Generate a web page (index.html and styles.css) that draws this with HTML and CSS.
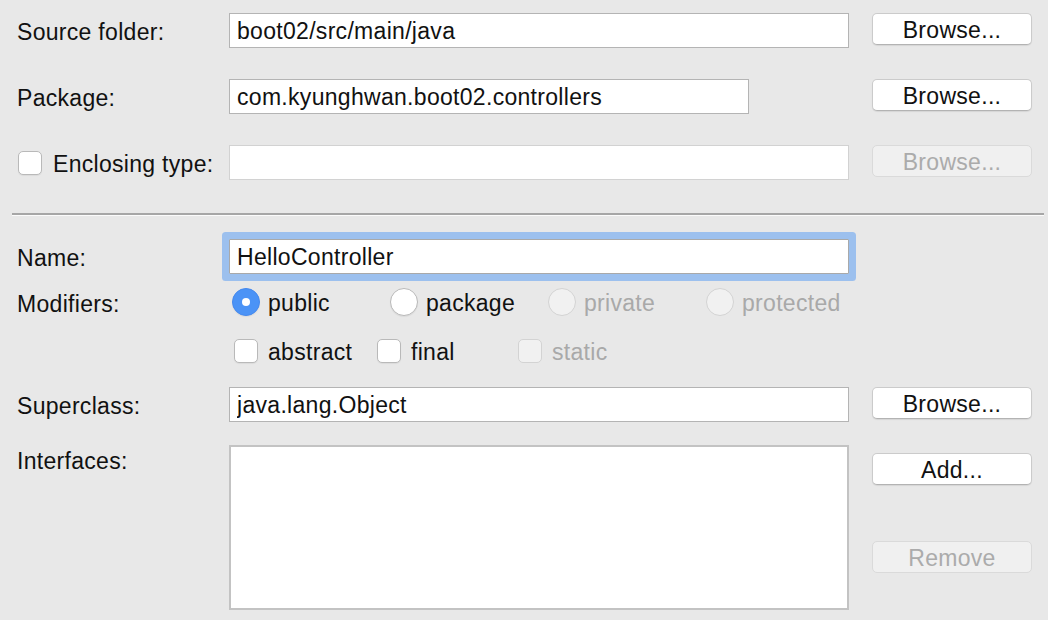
FILE: index.html
```html
<!DOCTYPE html>
<html>
<head>
<meta charset="utf-8">
<link rel="stylesheet" href="styles.css">
</head>
<body>
<div class="dialog">
  <div class="row r-first">
    <span class="lbl">Source folder:</span>
    <input class="field" type="text" value="boot02/src/main/java">
    <button class="btn">Browse...</button>
  </div>
  <div class="row r-gap31">
    <span class="lbl">Package:</span>
    <input class="field short" type="text" value="com.kyunghwan.boot02.controllers">
    <button class="btn">Browse...</button>
  </div>
  <div class="row r-gap31">
    <span class="lbl with-check"><span class="check"></span>Enclosing type:</span>
    <input class="field disabled" type="text" value="">
    <button class="btn disabled">Browse...</button>
  </div>

  <div class="separator"></div>

  <div class="row r-name">
    <span class="lbl">Name:</span>
    <input class="field focused" type="text" value="HelloController">
  </div>
  <div class="row r-mods">
    <span class="lbl">Modifiers:</span>
    <div class="options radios">
      <span class="opt"><span class="radio on"></span>public</span>
      <span class="opt"><span class="radio"></span>package</span>
      <span class="opt off"><span class="radio"></span>private</span>
      <span class="opt off"><span class="radio"></span>protected</span>
    </div>
  </div>
  <div class="row r-checks">
    <span class="lbl"></span>
    <div class="options checks">
      <span class="opt w-abstract"><span class="check"></span>abstract</span>
      <span class="opt w-final"><span class="check"></span>final</span>
      <span class="opt off"><span class="check"></span>static</span>
    </div>
  </div>
  <div class="row r-super">
    <span class="lbl">Superclass:</span>
    <input class="field" type="text" value="java.lang.Object">
    <button class="btn">Browse...</button>
  </div>
  <div class="row r-ifaces">
    <span class="lbl top">Interfaces:</span>
    <div class="list"></div>
    <div class="btn-col">
      <button class="btn">Add...</button>
      <button class="btn disabled">Remove</button>
    </div>
  </div>
</div>
</body>
</html>
```

FILE: styles.css
```css
html, body {
  margin: 0;
  padding: 0;
  background: #e8e8e8;
  height: 100%;
  overflow: hidden;
}
body {
  font-family: "Liberation Sans", Arial, sans-serif;
  font-size: 23px;
  line-height: 26px;
  letter-spacing: 0.3px;
  color: #111;
}
.dialog {
  padding: 13px 16px 0 17px;
  width: 1015px;
}
.row {
  display: grid;
  grid-template-columns: 189px 620px 160px;
  column-gap: 23px;
  align-items: center;
}
.r-gap31 { margin-top: 31px; }
.lbl {
  white-space: nowrap;
  display: flex;
  align-items: center;
  padding-top: 2px;
  height: 26px;
}
.lbl.top { align-self: start; padding-top: 3px; }
.with-check .check { margin-left: 1px; margin-right: 11px; position: relative; top: -1px; }

.field {
  box-sizing: border-box;
  height: 35px;
  width: 620px;
  margin: 0;
  padding: 2px 7px 0;
  border: 1px solid #b4b4b4;
  background: #fff;
  font-family: inherit;
  font-size: 23px;
  letter-spacing: 0.3px;
  color: #111;
  outline: none;
  border-radius: 0;
}
.field.short { width: 520px; }
.field.disabled { border-color: #d2d2d2; }
.field.focused {
  border-color: #a9a9a9;
  box-shadow: 0 0 0 7px #9cc0ee;
  border-radius: 1px;
}

.btn {
  box-sizing: border-box;
  align-self: start;
  width: 160px;
  height: 32px;
  margin: 0;
  padding: 2px 0 0;
  background: #fff;
  border: 1px solid #cbcbcb;
  border-bottom-color: #b3b3b3;
  border-radius: 5px;
  box-shadow: 0 1px 1px rgba(0,0,0,0.08);
  font-family: inherit;
  font-size: 23px;
  letter-spacing: 0.3px;
  color: #111;
  line-height: 28px;
}
.btn.disabled {
  background: #f0f0f0;
  border-color: #dadada;
  box-shadow: none;
  color: #ababab;
}

.separator {
  margin: 33px -12px 0 -5px;
  height: 2px;
  background: #a6a6a6;
  border-bottom: 1px solid #fbfbfb;
}

.r-name { margin-top: 23px; }
.r-mods { margin-top: 15px; height: 28px; }
.r-checks { margin-top: 21px; height: 24px; }
.r-super { margin-top: 25px; }
.r-ifaces { margin-top: 23px; align-items: start; }

.options {
  display: flex;
  align-items: center;
  grid-column: 2 / 4;
  white-space: nowrap;
}
.radios { padding-left: 3px; }
.radios .opt { width: 158px; height: 28px; line-height: 28px; }
.checks { padding-left: 5px; }
.checks .opt { height: 24px; line-height: 24px; }
.w-abstract { width: 143px; }
.w-final { width: 141px; }
.opt {
  display: flex;
  align-items: center;
}
.opt.off { color: #a9a9a9; }

.radio {
  box-sizing: border-box;
  width: 28px;
  height: 28px;
  border-radius: 50%;
  background: #fff;
  border: 1px solid #b9b9b9;
  box-shadow: 0 1px 1px rgba(0,0,0,0.06);
  margin-right: 8px;
  flex: none;
  position: relative;
  top: -1px;
}
.radio.on {
  background: #4b93f6;
  border-color: #4589ee;
}
.radio.on::after {
  content: "";
  position: absolute;
  left: 9px;
  top: 9px;
  width: 8px;
  height: 8px;
  border-radius: 50%;
  background: #fff;
}
.opt.off .radio {
  background: #f1f1f1;
  border-color: #d3d3d3;
  box-shadow: none;
}

.check {
  box-sizing: border-box;
  width: 24px;
  height: 24px;
  border-radius: 5px;
  background: #fff;
  border: 1px solid #b9b9b9;
  box-shadow: 0 1px 1px rgba(0,0,0,0.06);
  margin-right: 10px;
  flex: none;
}
.checks .check { position: relative; top: -1px; }
.opt.off .check {
  background: #f1f1f1;
  border-color: #d3d3d3;
  box-shadow: none;
}

.list {
  box-sizing: border-box;
  height: 165px;
  width: 620px;
  background: #fff;
  border: 2px solid #c3c3c3;
}
.btn-col {
  display: flex;
  flex-direction: column;
  padding-top: 8px;
  gap: 56px;
}
```
